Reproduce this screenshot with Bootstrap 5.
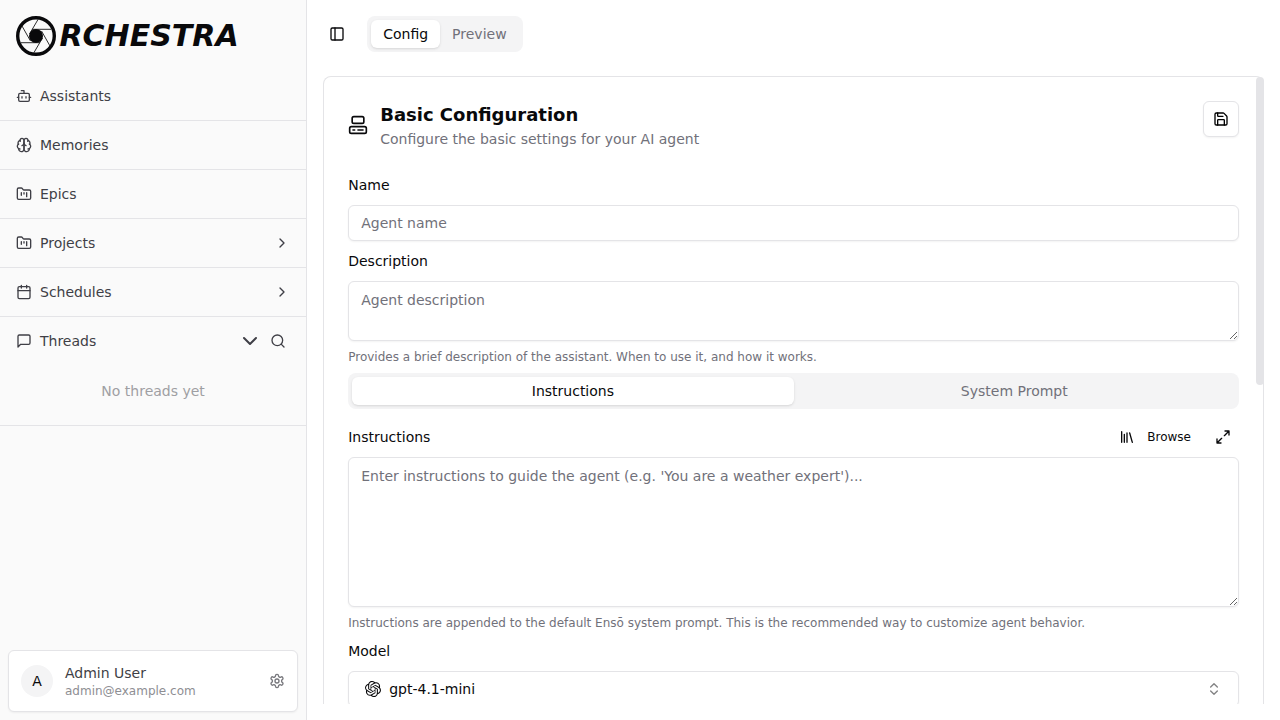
<!DOCTYPE html>
<html lang="en">
<head>
<meta charset="utf-8">
<meta name="viewport" content="width=device-width, initial-scale=1">
<title>Orchestra</title>
<link href="https://cdn.jsdelivr.net/npm/bootstrap@5.3.0/dist/css/bootstrap.min.css" rel="stylesheet">
<style>
:root{--line:#e4e4e7;--ink:#09090b;--muted:#71717a;--soft:#f4f4f5;--side:#3f3f46}
body{font-family:"DejaVu Sans",sans-serif;font-size:14px;line-height:20px;color:var(--ink);background:#fff}
svg{display:block;flex:none}
.ic{fill:none;stroke:currentColor;stroke-width:2;stroke-linecap:round;stroke-linejoin:round;width:16px;height:16px}
.ic-lg{width:20px;height:20px}
.ic-xl{width:24px;height:24px}
.sidebar{width:24%;background:#fafafa;border-right:1px solid var(--line);color:var(--side)}
.brand{height:72px;padding-left:16px;color:var(--ink)}
.brand-name{font-size:30px;line-height:36px;font-weight:700;font-style:italic;margin-left:3.5px}
.nav-row{height:49px;padding:0 16px;border-bottom:1px solid var(--line);color:inherit;text-decoration:none}
.nav-row.open{height:48px;border-bottom:0}
.threads-empty{height:61px;padding-top:16px;border-bottom:1px solid var(--line);color:#9f9fa3}
.user-box{margin:8px;height:62px;padding:0 12px;background:#fff;border:1px solid var(--line);border-radius:6px;box-shadow:0 1px 2px rgba(0,0,0,.05)}
.avatar{width:32px;height:32px;background:var(--soft);color:var(--ink)}
.mail{font-size:12px;line-height:16px;color:#8e8e93}
.gear{color:#78787d}
.topbar{height:68px;padding:0 22px;gap:22px}
.seg{background:var(--soft);border-radius:8px;padding:4px;height:36px}
.seg button{border:0;background:none;height:28px;padding:0 12px;border-radius:6px;color:var(--muted);line-height:20px}
.seg button.active{background:#fff;color:var(--ink);box-shadow:0 1px 3px rgba(0,0,0,.1),0 1px 2px -1px rgba(0,0,0,.1)}
.viewport-box{margin:8px 16px 16px;min-height:0}
.panel{border:1px solid var(--line);border-bottom:0;border-radius:8px 8px 0 0;padding:24px;height:100%}
.panel-head{margin-bottom:26px}
.panel-title{gap:12px}
.panel h1{font-size:18px;line-height:28px;font-weight:700}
.sub{color:var(--muted)}
.save-btn{width:36px;height:36px;border:1px solid var(--line);border-radius:6px;background:#fff;box-shadow:0 1px 2px rgba(0,0,0,.05)}
.field{display:block;width:100%;border:1px solid var(--line);border-radius:6px;padding:7px 12px;font-size:14px;line-height:20px;background:#fff;color:var(--ink);box-shadow:0 1px 2px rgba(0,0,0,.05);outline:0}
.field::placeholder{color:var(--muted);opacity:1}
textarea.field{padding-top:8px}
.field.line{height:36px}
.field.brief{height:60px}
.field.long{height:150px}
.lbl{line-height:20px}
.hint{font-size:12px;line-height:16px;color:var(--muted)}
.g10{margin-top:10px}
.tools{height:32px;margin:12px 0 4px}
.tools .btn-plain{border:0;background:none;padding:0 8px;height:32px;font-size:12px;color:var(--ink)}
.thumb{position:absolute;right:0;top:1px;width:8px;height:308px;border-radius:4px;background:var(--line)}
</style>
</head>
<body class="vh-100 overflow-hidden">
<div class="d-flex vh-100">
  <aside class="sidebar d-flex flex-column flex-shrink-0">
    <div class="brand d-flex align-items-center">
      <svg width="40" height="40" viewBox="0 0 40 40" fill="none" stroke="currentColor"><circle cx="20" cy="20" r="18.3" stroke-width="3.4"/><path stroke-width="1" stroke-opacity=".85" d="M25.5 15 34 30M16 13.3h19M13.5 18 22 3.5M14.5 25 6 10M24 26.7H5M26.5 22 18 36.5"/><circle cx="20" cy="20" r="7" fill="currentColor" stroke="none"/></svg>
      <span class="brand-name">RCHESTRA</span>
    </div>
    <nav>
      <a class="nav-row d-flex align-items-center gap-2" href="#"><svg class="ic" viewBox="0 0 24 24"><path d="M12 8V4H8M2 14h2M20 14h2M15 13v2M9 13v2"/><rect width="16" height="12" x="4" y="8" rx="2"/></svg>Assistants</a>
      <a class="nav-row d-flex align-items-center gap-2" href="#"><svg class="ic" viewBox="0 0 24 24"><path d="M12 5a3 3 0 1 0-5.997.125 4 4 0 0 0-2.526 5.77 4 4 0 0 0 .556 6.588A4 4 0 1 0 12 18Z"/><path d="M12 5a3 3 0 1 1 5.997.125 4 4 0 0 1 2.526 5.77 4 4 0 0 1-.556 6.588A4 4 0 1 1 12 18Z"/><path d="M15 13a4.5 4.5 0 0 1-3-4 4.5 4.5 0 0 1-3 4M17.599 6.5a3 3 0 0 0 .399-1.375M6.003 5.125A3 3 0 0 0 6.401 6.5M3.477 10.896a4 4 0 0 1 .585-.396M19.938 10.5a4 4 0 0 1 .585.396M6 18a4 4 0 0 1-1.967-.516M19.967 17.484A4 4 0 0 1 18 18"/></svg>Memories</a>
      <a class="nav-row d-flex align-items-center gap-2" href="#"><svg class="ic" viewBox="0 0 24 24"><path d="M4 20h16a2 2 0 0 0 2-2V8a2 2 0 0 0-2-2h-7.93a2 2 0 0 1-1.66-.9l-.82-1.2A2 2 0 0 0 7.93 3H4a2 2 0 0 0-2 2v13c0 1.1.9 2 2 2ZM8 10v4M12 10v2M16 10v6"/></svg>Epics</a>
      <a class="nav-row d-flex align-items-center gap-2" href="#"><svg class="ic" viewBox="0 0 24 24"><path d="M4 20h16a2 2 0 0 0 2-2V8a2 2 0 0 0-2-2h-7.93a2 2 0 0 1-1.66-.9l-.82-1.2A2 2 0 0 0 7.93 3H4a2 2 0 0 0-2 2v13c0 1.1.9 2 2 2ZM8 10v4M12 10v2M16 10v6"/></svg>Projects<svg class="ic ms-auto" viewBox="0 0 24 24"><path d="m9 18 6-6-6-6"/></svg></a>
      <a class="nav-row d-flex align-items-center gap-2" href="#"><svg class="ic" viewBox="0 0 24 24"><path d="M8 2v4M16 2v4M3 10h18"/><rect width="18" height="18" x="3" y="4" rx="2"/></svg>Schedules<svg class="ic ms-auto" viewBox="0 0 24 24"><path d="m9 18 6-6-6-6"/></svg></a>
      <div class="nav-row open d-flex align-items-center gap-2"><svg class="ic" viewBox="0 0 24 24"><path d="M21 15a2 2 0 0 1-2 2H7l-4 4V5a2 2 0 0 1 2-2h14a2 2 0 0 1 2 2z"/></svg>Threads<svg class="ic ic-xl ms-auto" viewBox="0 0 24 24"><path d="m6 9 6 6 6-6"/></svg><svg class="ic me-1" viewBox="0 0 24 24"><circle cx="11" cy="11" r="8"/><path d="m21 21-4.3-4.3"/></svg></div>
      <div class="threads-empty text-center">No threads yet</div>
    </nav>
    <div class="user-box mt-auto d-flex align-items-center">
      <div class="avatar rounded-circle d-flex align-items-center justify-content-center">A</div>
      <div class="ms-2 ps-1 flex-grow-1"><div>Admin User</div><div class="mail">admin@example.com</div></div>
      <svg class="ic gear" viewBox="0 0 24 24"><path d="M12.22 2h-.44a2 2 0 0 0-2 2v.18a2 2 0 0 1-1 1.73l-.43.25a2 2 0 0 1-2 0l-.15-.08a2 2 0 0 0-2.73.73l-.22.38a2 2 0 0 0 .73 2.73l.15.1a2 2 0 0 1 1 1.72v.51a2 2 0 0 1-1 1.74l-.15.09a2 2 0 0 0-.73 2.73l.22.38a2 2 0 0 0 2.73.73l.15-.08a2 2 0 0 1 2 0l.43.25a2 2 0 0 1 1 1.73V20a2 2 0 0 0 2 2h.44a2 2 0 0 0 2-2v-.18a2 2 0 0 1 1-1.73l.43-.25a2 2 0 0 1 2 0l.15.08a2 2 0 0 0 2.73-.73l.22-.39a2 2 0 0 0-.73-2.73l-.15-.08a2 2 0 0 1-1-1.74v-.5a2 2 0 0 1 1-1.74l.15-.09a2 2 0 0 0 .73-2.73l-.22-.38a2 2 0 0 0-2.73-.73l-.15.08a2 2 0 0 1-2 0l-.43-.25a2 2 0 0 1-1-1.73V4a2 2 0 0 0-2-2z"/><circle cx="12" cy="12" r="3"/></svg>
    </div>
  </aside>

  <main class="flex-grow-1 d-flex flex-column overflow-hidden">
    <header class="topbar d-flex align-items-center flex-shrink-0">
      <svg class="ic" viewBox="0 0 24 24"><rect width="18" height="18" x="3" y="3" rx="2"/><path d="M9 3v18"/></svg>
      <div class="seg d-flex"><button class="active">Config</button><button>Preview</button></div>
    </header>
    <div class="viewport-box position-relative overflow-hidden flex-grow-1">
      <section class="panel">
        <div class="panel-head d-flex align-items-start justify-content-between">
          <div class="panel-title d-flex align-items-center">
            <svg class="ic ic-lg" viewBox="0 0 24 24"><rect width="14" height="8" x="5" y="2" rx="2"/><rect width="20" height="8" x="2" y="14" rx="2"/><path d="M6 18h2M12 18h6"/></svg>
            <div><h1 class="mb-0">Basic Configuration</h1><div class="sub">Configure the basic settings for your AI agent</div></div>
          </div>
          <button class="save-btn d-flex align-items-center justify-content-center p-0" aria-label="Save"><svg class="ic" viewBox="0 0 24 24"><path d="M15.2 3a2 2 0 0 1 1.4.6l3.8 3.8a2 2 0 0 1 .6 1.4V19a2 2 0 0 1-2 2H5a2 2 0 0 1-2-2V5a2 2 0 0 1 2-2z"/><path d="M17 21v-7a1 1 0 0 0-1-1H8a1 1 0 0 0-1 1v7M7 3v4a1 1 0 0 0 1 1h7"/></svg></button>
        </div>
        <div class="lbl">Name</div>
        <input class="field line g10" placeholder="Agent name">
        <div class="lbl g10">Description</div>
        <textarea class="field brief g10" placeholder="Agent description"></textarea>
        <div class="hint mt-2">Provides a brief description of the assistant. When to use it, and how it works.</div>
        <div class="seg d-flex mt-2"><button class="active flex-fill w-50">Instructions</button><button class="flex-fill w-50">System Prompt</button></div>
        <div class="tools d-flex align-items-center">
          <span class="me-auto">Instructions</span>
          <button class="btn-plain d-flex align-items-center"><svg class="ic me-2" viewBox="0 0 24 24"><path d="m16 6 4 14M12 6v14M8 8v12M4 4v16"/></svg><span class="ps-1">Browse</span></button>
          <button class="btn-plain ms-2" aria-label="Expand"><svg class="ic" viewBox="0 0 24 24"><path d="M15 3h6v6M9 21H3v-6M21 3l-7 7M3 21l7-7"/></svg></button>
        </div>
        <textarea class="field long" placeholder="Enter instructions to guide the agent (e.g. 'You are a weather expert')..."></textarea>
        <div class="hint mt-2">Instructions are appended to the default Ensō system prompt. This is the recommended way to customize agent behavior.</div>
        <div class="lbl g10">Model</div>
        <div class="field line g10 d-flex align-items-center px-3">
          <svg width="16" height="16" viewBox="0 0 24 24" fill="currentColor"><path d="M22.2819 9.8211a5.9847 5.9847 0 0 0-.5157-4.9108 6.0462 6.0462 0 0 0-6.5098-2.9A6.0651 6.0651 0 0 0 4.9807 4.1818a5.9847 5.9847 0 0 0-3.9977 2.9 6.0462 6.0462 0 0 0 .7427 7.0966 5.98 5.98 0 0 0 .511 4.9107 6.051 6.051 0 0 0 6.5146 2.9001A5.9847 5.9847 0 0 0 13.2599 24a6.0557 6.0557 0 0 0 5.7718-4.2058 5.9894 5.9894 0 0 0 3.9977-2.9001 6.0557 6.0557 0 0 0-.7475-7.0729zm-9.022 12.6081a4.4755 4.4755 0 0 1-2.8764-1.0408l.1419-.0804 4.7783-2.7582a.7948.7948 0 0 0 .3927-.6813v-6.7369l2.02 1.1686a.071.071 0 0 1 .038.052v5.5826a4.504 4.504 0 0 1-4.4945 4.4944zm-9.6607-4.1254a4.4708 4.4708 0 0 1-.5346-3.0137l.142.0852 4.783 2.7582a.7712.7712 0 0 0 .7806 0l5.8428-3.3685v2.3324a.0804.0804 0 0 1-.0332.0615L9.74 19.9502a4.4992 4.4992 0 0 1-6.1408-1.6464zM2.3408 7.8956a4.485 4.485 0 0 1 2.3655-1.9728V11.6a.7664.7664 0 0 0 .3879.6765l5.8144 3.3543-2.0201 1.1685a.0757.0757 0 0 1-.071 0l-4.8303-2.7865A4.504 4.504 0 0 1 2.3408 7.872zm16.5963 3.8558L13.1038 8.364 15.1192 7.2a.0757.0757 0 0 1 .071 0l4.8303 2.7913a4.4944 4.4944 0 0 1-.6765 8.1042v-5.6772a.79.79 0 0 0-.407-.667zm2.0107-3.0231l-.142-.0852-4.7735-2.7818a.7759.7759 0 0 0-.7854 0L9.409 9.2297V6.8974a.0662.0662 0 0 1 .0284-.0615l4.8303-2.7866a4.4992 4.4992 0 0 1 6.6802 4.66zM8.3065 12.863l-2.02-1.1638a.0804.0804 0 0 1-.038-.0567V6.0742a4.4992 4.4992 0 0 1 7.3757-3.4537l-.142.0805L8.704 5.459a.7948.7948 0 0 0-.3927.6813zm1.0976-2.3654l2.602-1.4998 2.6069 1.4998v2.9994l-2.5974 1.4997-2.6067-1.4997Z"/></svg>
          <span class="ms-2">gpt-4.1-mini</span>
          <svg class="ic ms-auto opacity-50" viewBox="0 0 24 24"><path d="m7 15 5 5 5-5M7 9l5-5 5 5"/></svg>
        </div>
      </section>
      <div class="thumb"></div>
    </div>
  </main>
</div>
<script src="https://cdn.jsdelivr.net/npm/bootstrap@5.3.0/dist/js/bootstrap.bundle.min.js"></script>
</body>
</html>
